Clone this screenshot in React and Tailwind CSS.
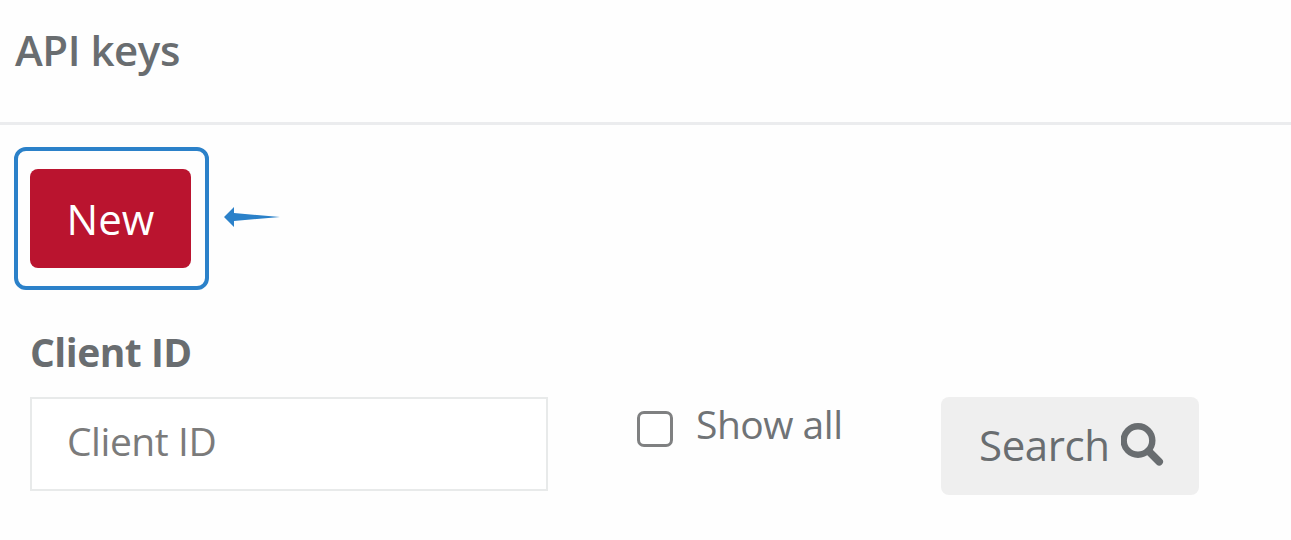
function PageHeader({ title }) {
  return (
    <header className="h-[125px] shrink-0 border-b-3 border-[#ebecee] pl-[15px] pt-5">
      <h1 className="text-[42px] leading-[60px] font-semibold tracking-[-0.45px]">{title}</h1>
    </header>
  );
}

function PointerArrow() {
  return (
    <svg className="mb-[3px]" width="56" height="20" viewBox="0 0 56 20" fill="#2b81c9">
      <path d="M0 10 L10 0 V6 L56 10 L10 14 V20 Z" />
    </svg>
  );
}

function SearchIcon({ className }) {
  return (
    <svg
      className={className}
      width="43"
      height="43"
      viewBox="0 0 43 43"
      fill="none"
      stroke="currentColor"
      strokeLinecap="round"
    >
      <circle cx="17" cy="17.5" r="14.3" strokeWidth="6.4" />
      <path d="M28 28.5 L38.2 38.7" strokeWidth="7.6" />
    </svg>
  );
}

function NewButton() {
  return (
    <div className="flex items-center gap-[15px] pl-3.5">
      <div className="h-[143px] w-[195px] rounded-xl border-4 border-[#2b81c9] pl-3 pt-[18px]">
        <button className="block h-[99px] w-[161px] rounded-[8px] bg-[#ba142f] text-[42px] leading-[99px] text-white">
          New
        </button>
      </div>
      <PointerArrow />
    </div>
  );
}

function SearchForm() {
  return (
    <form className="flex items-start pl-[30px]" onSubmit={(e) => e.preventDefault()}>
      <div className="w-[518px] shrink-0">
        <label htmlFor="clientId" className="block h-[71px] text-[39px] leading-[52px] font-bold tracking-[-0.5px]">
          Client ID
        </label>
        <input
          id="clientId"
          type="text"
          placeholder="Client ID"
          className="block h-[94px] w-full border-2 border-[#e8eaea] bg-white pb-2 pl-[35px] text-[39px] tracking-[-0.45px] outline-none placeholder:text-[#7b7b7b]"
        />
      </div>
      <label className="ml-[89px] mt-[71px] flex h-[60px] w-[304px] shrink-0 items-center gap-[23px]">
        <input
          type="checkbox"
          className="mt-1 size-9 appearance-none rounded-[7px] border-3 border-[#7f8081] bg-white"
        />
        <span className="pb-1.5 text-[39px] leading-[52px] tracking-[-0.5px] text-[#707376]">Show all</span>
      </label>
      <button className="mt-[71px] flex h-[98px] w-[258px] shrink-0 items-center rounded-[8px] bg-[#efefef] pb-1 pl-[38px] text-[42px] tracking-[-0.4px]">
        <span>Search</span>
        <SearchIcon className="ml-[11px]" />
      </button>
    </form>
  );
}

export default function App() {
  return (
    <div className="flex h-[540px] w-[1291px] flex-col overflow-hidden bg-[#fefefe] font-['Open_Sans',sans-serif] text-[#696d70]">
      <PageHeader title="API keys" />
      <main className="flex flex-col gap-9 pt-[22px]">
        <NewButton />
        <SearchForm />
      </main>
    </div>
  );
}
